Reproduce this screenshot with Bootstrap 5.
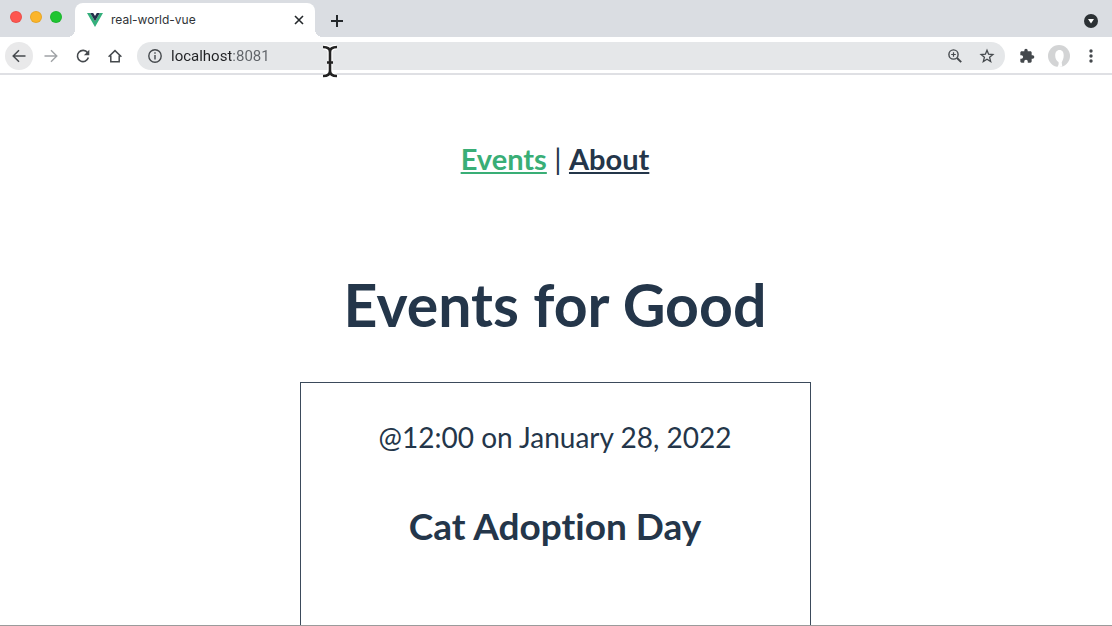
<!DOCTYPE html>
<html lang="en">
<head>
<meta charset="utf-8">
<meta name="viewport" content="width=device-width, initial-scale=1">
<title>real-world-vue</title>
<link href="https://cdn.jsdelivr.net/npm/bootstrap@5.3.0/dist/css/bootstrap.min.css" rel="stylesheet">
<style>
  body { font-family: Roboto, "Liberation Sans", sans-serif; }
  svg { display: block; }

  .tab-strip { height: 37px; background: #dadde2; padding: 3px 7px 0 10px; }
  .light { width: 12px; height: 12px; border: 1px solid rgba(0, 0, 0, .08); }
  .light-close { background: #fe5650; }
  .light-min { background: #fbb52a; }
  .light-zoom { background: #1fc532; }
  .lights { gap: 8px; height: 28px; width: 65px; }
  .browser-tab { width: 240px; height: 34px; background: #fff; border-radius: 8px 8px 0 0; padding: 0 8px 0 12px; font-family: Inter, Roboto, sans-serif; font-size: 12px; color: #2f3336; }
  .browser-tab::before, .browser-tab::after { content: ""; position: absolute; bottom: 0; width: 8px; height: 8px; }
  .browser-tab::before { right: 100%; background: radial-gradient(circle at 0 0, transparent 8px, #fff 8px); }
  .browser-tab::after { left: 100%; background: radial-gradient(circle at 100% 0, transparent 8px, #fff 8px); }

  .icon-btn { width: 28px; height: 28px; padding: 0; border: 0; background: none; color: #45494d; display: flex; align-items: center; justify-content: center; border-radius: 50%; flex: none; }
  .tab-strip .icon-btn { color: #24282b; }
  .tab-close { width: 16px; height: 16px; }
  .icon-btn.current { background: #e9e9ea; }
  .icon-btn.dim { color: #a0a3a6; }

  .tool-row { height: 38px; padding: 2px 7px 0 5px; gap: 4px; border-bottom: 2px solid #dfe0e4; }
  .omnibox { height: 28px; background: #e5e7e9; border-radius: 14px; padding: 0 4px; }
  .address { border: 0; outline: 0; padding: 0; margin-left: 2px; font-size: 15px; height: 28px; min-width: 0; color: #202124; background: linear-gradient(90deg, #202124 60px, #5f6368 60px) text; -webkit-background-clip: text; -webkit-text-fill-color: transparent; }

  .viewport { font-family: Lato, "Open Sans", sans-serif; font-variant-ligatures: none; color: #24364a; font-size: 28px; line-height: 38px; border-bottom: 1px solid #9b9b9b; padding: 65px 2px 0 0; }
  .site-nav { font-size: 29px; margin-bottom: 92px; }
  .site-nav a { color: #24364a; font-weight: 700; text-decoration-thickness: 2px; text-underline-offset: 2px; }
  .site-nav a.here { color: #39ae76; }
  .site-nav .divider { font-weight: 400; }
  .page-title { font-size: 59px; line-height: 70px; font-weight: 700; margin-bottom: 42px; }
  .event-card { width: 511px; max-width: 100%; height: 300px; border: 1px solid #3b4a5b; padding-top: 35px; color: #24364a; }
  .event-card h2 { font-size: 37px; line-height: 46px; font-weight: 700; margin: 47px 0 0; }
  .pointer { left: 321px; top: 44px; }
</style>
</head>
<body class="vh-100 d-flex flex-column overflow-hidden bg-white">
<header class="flex-shrink-0">
  <div class="tab-strip d-flex">
    <div class="lights d-flex align-items-center">
      <span class="light light-close rounded-circle"></span>
      <span class="light light-min rounded-circle"></span>
      <span class="light light-zoom rounded-circle"></span>
    </div>
    <div class="browser-tab position-relative d-flex align-items-center">
      <svg class="me-2" width="16" height="14" viewBox="0 0 16 14"><path fill="#35b07c" d="M0 0h3.200L8 8.300 12.800 0H16L8 14z"/><path fill="#22304a" d="M3.200 0h3L8 3l1.800-3h3L8 8.300z"/></svg>
      <span class="flex-grow-1">real-world-vue</span>
      <button class="icon-btn tab-close" aria-label="Close tab"><svg width="10" height="10" viewBox="0 0 10 10" stroke="currentColor" stroke-width="1.600"><path d="M1 1l8 8M9 1l-8 8"/></svg></button>
    </div>
    <button class="icon-btn ms-2 mt-1" aria-label="New tab"><svg width="12" height="12" viewBox="0 0 12 12" stroke="currentColor" stroke-width="2"><path d="M6 0v12M0 6h12"/></svg></button>
    <button class="icon-btn ms-auto mt-1" aria-label="Search tabs"><svg width="14" height="14" viewBox="0 0 14 14"><circle cx="7" cy="7" r="7" fill="#2c3135"/><path d="M4 5h6L7 9.500z" fill="#fff"/></svg></button>
  </div>
  <div class="tool-row d-flex align-items-center">
    <button class="icon-btn current" aria-label="Back"><svg width="16" height="16" viewBox="0 0 16 16" fill="none" stroke="currentColor" stroke-width="1.500"><path d="M14.500 8H2.500M8 2.200L2.200 8 8 13.800"/></svg></button>
    <button class="icon-btn dim" aria-label="Forward"><svg width="16" height="16" viewBox="0 0 16 16" fill="none" stroke="currentColor" stroke-width="1.400"><path d="M1.500 8H13.500M8 2.200L13.800 8 8 13.800"/></svg></button>
    <button class="icon-btn" aria-label="Reload"><svg width="16" height="16" viewBox="0 0 16 16"><path d="M12.600 4.700A5.600 5.600 0 1 0 13.400 9.600" fill="none" stroke="currentColor" stroke-width="1.600"/><path fill="currentColor" d="M14.300 1.800v5.400h-5.400z"/></svg></button>
    <button class="icon-btn" aria-label="Home"><svg width="16" height="16" viewBox="0 0 16 16" fill="none" stroke="currentColor" stroke-width="1.500"><path d="M1.600 8.800L8 2.600l6.400 6.200M3.800 7.400v6.400h8.400V7.400"/></svg></button>
    <div class="omnibox d-flex align-items-center flex-grow-1 ms-1">
      <button class="icon-btn" aria-label="Site information"><svg width="14" height="14" viewBox="0 0 14 14" fill="none" stroke="currentColor" stroke-width="1.400"><circle cx="7" cy="7" r="6.200"/><path d="M7 6v4.500M7 3.300v1.500"/></svg></button>
      <input class="address flex-grow-1" type="text" value="localhost:8081" aria-label="Address" spellcheck="false">
      <button class="icon-btn me-1" aria-label="Zoom"><svg width="14" height="14" viewBox="0 0 14 14" fill="none" stroke="currentColor"><circle cx="5.500" cy="5.500" r="4.600" stroke-width="1.400"/><path d="M9 9l4.200 4.200" stroke-width="1.900"/><path d="M5.500 3.200v4.600M3.200 5.500h4.600" stroke-width="1.200"/></svg></button>
      <button class="icon-btn" aria-label="Bookmark"><svg width="16" height="16" viewBox="0 0 16 16" fill="none" stroke="currentColor" stroke-width="1.300"><path d="M8 2.200l1.600 4 4.300.3-3.300 2.800 1.100 4.300L8 11.300l-3.700 2.300 1.100-4.300-3.300-2.800 4.300-.3z"/></svg></button>
    </div>
    <button class="icon-btn ms-1" aria-label="Extensions"><svg width="16" height="16" viewBox="0 0 24 24" fill="currentColor"><path d="M20.500 11H19V7c0-1.100-.9-2-2-2h-4V3.500a2.500 2.500 0 0 0-5 0V5H4c-1.100 0-2 .9-2 2v3.800h1.500a2.700 2.700 0 0 1 0 5.400H2V20c0 1.100.9 2 2 2h3.800v-1.500a2.700 2.700 0 0 1 5.400 0V22H17c1.100 0 2-.9 2-2v-4h1.500a2.500 2.500 0 0 0 0-5z"/></svg></button>
    <button class="icon-btn" aria-label="Profile"><svg width="22" height="22" viewBox="0 0 22 22"><circle cx="11" cy="11" r="11" fill="#d3d4d5"/><path fill="#fff" d="M11.500 5c3 0 4.200 2.300 4.200 5.500 0 3-1 4.500-2 7l.6 4c-2 .6-3.500.6-5 .2 1.500-1.200 1.500-3 1.200-4.700C8.500 16 7.200 13.500 7.200 10.500c0-3.200 1.600-5.500 4.300-5.500z"/></svg></button>
    <button class="icon-btn" aria-label="Menu"><svg width="4" height="14" viewBox="0 0 4 14" fill="currentColor"><circle cx="2" cy="2" r="1.700"/><circle cx="2" cy="7" r="1.700"/><circle cx="2" cy="12" r="1.700"/></svg></button>
  </div>
</header>
<main class="viewport flex-grow-1 overflow-hidden text-center">
  <nav class="site-nav"><a class="here" href="#events">Events</a> <span class="divider">|</span> <a href="#about">About</a></nav>
  <h1 class="page-title">Events for Good</h1>
  <article class="event-card mx-auto">
    <div>@12:00 on January 28, 2022</div>
    <h2>Cat Adoption Day</h2>
  </article>
</main>
<svg class="pointer position-absolute pe-none" width="18" height="35" viewBox="0 0 18 35" fill="none"><g stroke="#fff" stroke-width="5"><path d="M2 3c4 0 7 1 7 5v19c0 4-3 5-7 5M16 3c-4 0-7 1-7 5v19c0 4 3 5 7 5"/></g><g stroke="#222" stroke-width="2.600"><path d="M2 3c4 0 7 1 7 5v19c0 4-3 5-7 5M16 3c-4 0-7 1-7 5v19c0 4 3 5 7 5M6 18.500h6"/></g></svg>
<script src="https://cdn.jsdelivr.net/npm/bootstrap@5.3.0/dist/js/bootstrap.bundle.min.js"></script>
</body>
</html>
